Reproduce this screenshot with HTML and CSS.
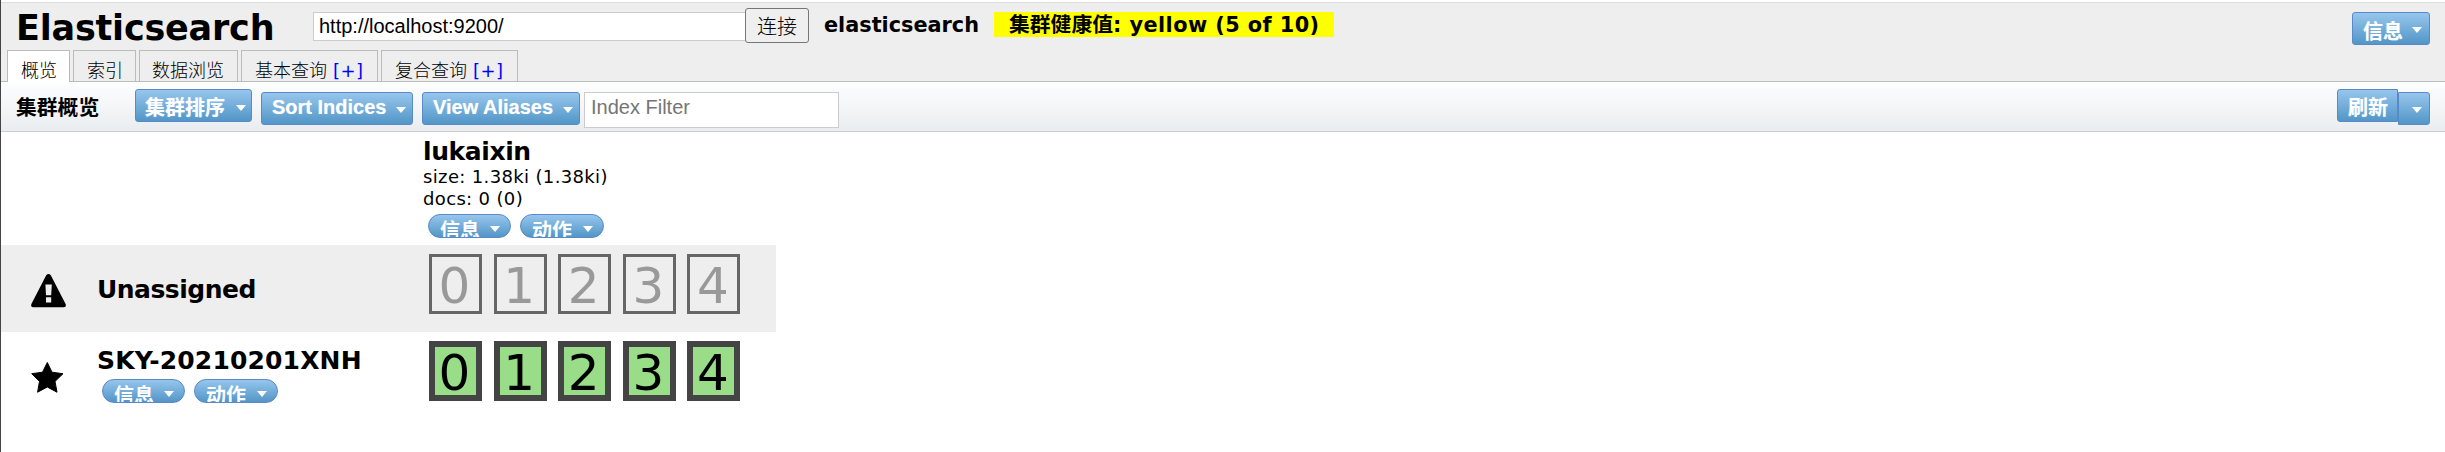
FILE: index.html
```html
<!DOCTYPE html>
<html lang="zh">
<head>
<meta charset="utf-8">
<title>elasticsearch-head</title>
<link rel="stylesheet" href="styles.css">
</head>
<body>
<div class="app">
  <header class="header">
    <div class="header-main">
      <h1 class="title">Elasticsearch</h1>
      <input class="url" type="text" value="http://localhost:9200/">
      <button class="connect">连接</button>
      <span class="cluster-name">elasticsearch</span>
      <span class="health">集群健康值<span class="health-value">: yellow (5 of 10)</span></span>
      <button class="btn btn-info"><span class="label">信息</span><i class="caret"></i></button>
    </div>
    <nav class="tabs">
      <div class="tab tab-active">概览</div>
      <div class="tab">索引</div>
      <div class="tab tab-browse">数据浏览</div>
      <div class="tab tab-query">基本查询 <a class="add">[+]</a></div>
      <div class="tab tab-query">复合查询 <a class="add">[+]</a></div>
    </nav>
  </header>
  <div class="toolbar">
    <h2 class="toolbar-title">集群概览</h2>
    <button class="btn btn-raised btn-sort"><span class="label">集群排序</span><i class="caret"></i></button>
    <button class="btn btn-indices"><span class="label latin">Sort Indices</span><i class="caret"></i></button>
    <button class="btn btn-aliases"><span class="label latin">View Aliases</span><i class="caret"></i></button>
    <input class="filter" type="text" placeholder="Index Filter">
    <div class="refresh">
      <button class="btn btn-raised btn-refresh"><span class="label">刷新</span></button>
      <button class="btn btn-more"><i class="caret"></i></button>
    </div>
  </div>
  <main class="overview">
    <section class="index-head">
      <h3 class="name index-name">lukaixin</h3>
      <div class="stat">size: 1.38ki (1.38ki)</div>
      <div class="stat">docs: 0 (0)</div>
      <div class="pills">
        <button class="pill"><span>信息</span><i class="caret"></i></button>
        <button class="pill"><span>动作</span><i class="caret"></i></button>
      </div>
    </section>
    <section class="node node-unassigned">
      <svg class="icon" width="36" height="34" viewBox="0 0 36 34"><path fill-rule="evenodd" d="M15.2 1.3Q17.500-1.300 19.800 1.300L34.600 30Q35.600 33 33 33.300H2Q-.600 33 .400 30ZM14.400 10.500L15 21.300H20.200L20.800 10.500ZM15 23.300V28.500H20.200V23.300Z"/></svg>
      <div class="node-info"><h3 class="name unassigned-name">Unassigned</h3></div>
      <div class="shards">
        <div class="shard">0</div><div class="shard">1</div><div class="shard">2</div><div class="shard">3</div><div class="shard">4</div>
      </div>
    </section>
    <section class="node">
      <svg class="icon" width="36" height="34" viewBox="0 0 36 34"><path stroke="#000" stroke-width="1" stroke-linejoin="round" d="M16.300 1.500L21 11.200L32 12.700L24 20.400L26 31.200L16.300 26L6.600 31.200L8.500 20.400L.700 12.700L11.500 11.200Z"/></svg>
      <div class="node-info">
        <h3 class="name node-name">SKY-20210201XNH</h3>
        <div class="pills">
          <button class="pill"><span>信息</span><i class="caret"></i></button>
          <button class="pill"><span>动作</span><i class="caret"></i></button>
        </div>
      </div>
      <div class="shards assigned">
        <div class="shard">0</div><div class="shard">1</div><div class="shard">2</div><div class="shard">3</div><div class="shard">4</div>
      </div>
    </section>
  </main>
</div>
</body>
</html>
```
FILE: styles.css
```css
* { box-sizing: border-box; }
body {
  margin: 0;
  background: #fff;
  color: #000;
  font-family: "DejaVu Sans", "Noto Sans CJK SC", sans-serif;
}
h1, h2, h3 { margin: 0; font-weight: bold; white-space: nowrap; }
button { padding: 0; margin: 0; }

.app { height: 452px; border-left: 1px solid #444; padding-top: 2px; overflow: hidden; }

/* header */
.header { height: 80px; background: #eee; border-top: 1px solid #ddd; border-bottom: 1px solid #bbb; }
.header-main { display: flex; align-items: flex-start; height: 47px; padding-right: 15px; }
.title { width: 297px; margin: 5px 0 0 15px; font-size: 35px; line-height: 41px; letter-spacing: -0.2px; }
.url {
  width: 433px; height: 29px; margin-top: 9px; padding: 0 5px;
  border: 1px solid #ccc; background: #fff; color: #000;
  font: 20px/26px "Liberation Sans", Arial, sans-serif;
}
.connect {
  width: 64px; height: 35px; margin-top: 5px; margin-left: -1px;
  border: 1px solid #767676; border-radius: 3px; background: #efefef; color: #000;
  font: 300 20px/32px "Noto Sans CJK SC", sans-serif;
}
.cluster-name { width: 170px; margin: 9px 0 0 15px; font-size: 20.800px; line-height: 27px; font-weight: bold; white-space: nowrap; }
.health {
  width: 340px; height: 25px; margin-top: 9px; padding-left: 15px; background: #ff0;
  font-size: 20.800px; line-height: 27px; font-weight: bold; white-space: nowrap;
}
.health-value { letter-spacing: 0.45px; }

/* buttons */
.btn {
  display: flex; align-items: flex-start; height: 33px; padding: 0 0 0 10px; margin-top: 10px;
  border: 1px solid #5a88c8; border-radius: 3px;
  background: linear-gradient(#96c6ed, #5296c7); color: #fff;
  font: bold 20px/29px "Noto Sans CJK SC", sans-serif; text-align: left; white-space: nowrap;
  text-shadow: 0 0 1px rgba(255,255,255,.5);
}
.btn .label { line-height: 34px; }
.btn .latin { font-family: "Liberation Sans", Arial, sans-serif; line-height: 29px; }
.caret { width: 0; height: 0; border: 5.500px solid transparent; border-top: 6px solid #fff; border-bottom: 0; }
.btn .caret { margin: 14px 7px 0 auto; }
.btn-info { width: 78px; margin: 9px 0 0 auto; }
.btn-info .label { line-height: 35px; }
.btn-raised { margin-top: 7px; }
.btn-sort { padding-left: 9px; }
.btn-raised .caret { margin: 15px 5px 0 auto; }

/* tabs */
.tabs { display: flex; gap: 3px; padding-left: 6px; }
.tab {
  width: 63px; height: 31px; border: 1px solid #bbb; border-bottom: 0; padding: 7px 0 0 13px;
  background: #eee; font: 300 18px/23px "Noto Sans CJK SC", sans-serif; white-space: nowrap;
}
.tab-active { height: 32px; background: #fff; }
.tab-browse { width: 99px; padding-left: 12px; }
.tab-query { width: 137px; }
.add { margin-left: 2px; font-family: "DejaVu Sans", sans-serif; font-weight: 400; letter-spacing: 0.5px; color: #00f; }

/* toolbar */
.toolbar { display: flex; height: 50px; padding-right: 15px; border-bottom: 1px solid #ccc; background: linear-gradient(#fdfefe, #eaedf0); }
.toolbar-title { width: 119px; margin-left: 15px; font: bold 20.800px/48px "Noto Sans CJK SC", sans-serif; }
.btn-sort { width: 117px; }
.btn-indices { width: 152px; margin-left: 9px; }
.btn-aliases { width: 158px; margin-left: 9px; }
.btn-indices .caret, .btn-aliases .caret { margin-right: 6px; }
.filter {
  width: 255px; height: 36px; margin: 10px 0 0 4px; padding: 0 6px 5px;
  border: 1px solid #ccc; background: #fff; font: 20px/26px "Liberation Sans", Arial, sans-serif;
}
.filter::placeholder { color: #757575; }
.refresh { display: flex; margin-left: auto; }
.btn-refresh { width: 61px; border-radius: 3px 0 0 3px; }
.btn-more { width: 32px; border-radius: 0 3px 3px 0; }

/* cluster table */
.overview { width: 775px; }
.index-head { height: 113px; padding: 5px 0 0 422px; }
.name { font-size: 25px; line-height: 30px; }
.index-name { height: 29px; letter-spacing: -0.4px; }
.unassigned-name { letter-spacing: -0.5px; }
.node-name { letter-spacing: 0.15px; }
.stat { font-size: 18px; line-height: 22px; white-space: nowrap; letter-spacing: 0.35px; }
.pills { display: flex; gap: 9px; padding-left: 5px; }
.index-head .pills { margin-top: 4px; }
.pill {
  display: flex; align-items: flex-start; width: 83px; height: 24px; padding: 0 0 0 11px; overflow: hidden;
  border: 1px solid #5a88c8; border-radius: 12px; background: linear-gradient(#96c6ed, #5296c7);
  color: #fff; font: bold 20px/29px "Noto Sans CJK SC", sans-serif;
}
.pill + .pill { width: 84px; }
.pill .caret { margin: 11px 10px 0 auto; }
.node { display: flex; height: 87px; }
.node-unassigned { background: #eee; }
.icon { flex: none; width: 36px; height: 34px; margin: 29px 0 0 30px; }
.node-info { width: 332px; margin-left: 30px; padding-top: 14px; }
.node-unassigned .node-info { padding-top: 30px; }
.node-info .pills { margin-top: 3px; }
.shards { display: flex; gap: 11.600px; padding-top: 9px; }
.shard {
  width: 53px; height: 60px; padding-right: 2px; border: 3px solid #666; color: #999;
  font-size: 50px; line-height: 59px; text-align: center;
}
.assigned .shard { border: 6px solid #444; background: #9d8; color: #000; line-height: 53px; }
```
